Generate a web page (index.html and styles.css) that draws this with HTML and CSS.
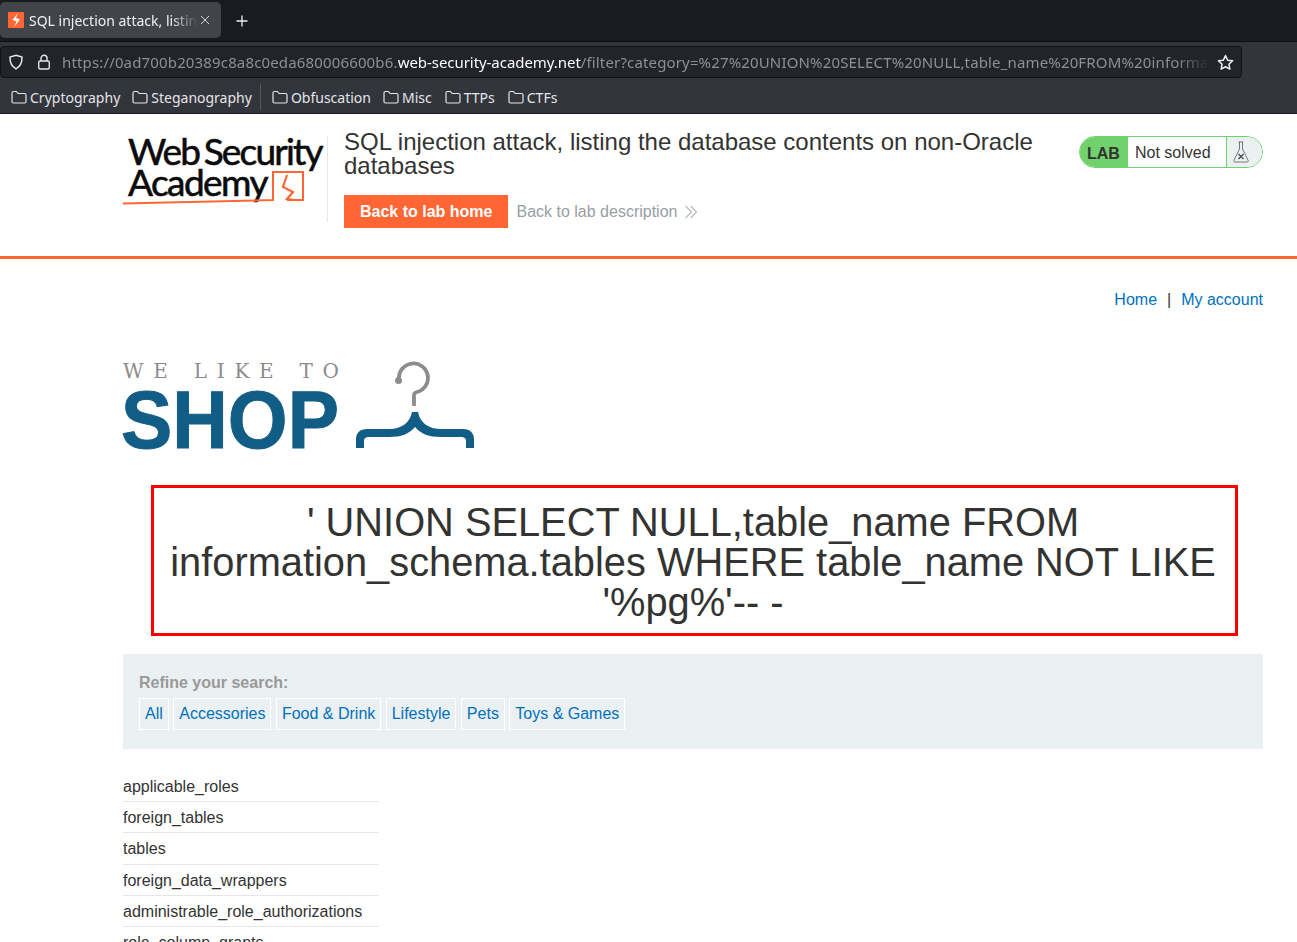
FILE: index.html
```html
<!DOCTYPE html>
<html lang="en">
<head>
<meta charset="utf-8">
<title>SQL injection attack</title>
<link rel="stylesheet" href="styles.css">
</head>
<body>
<div class="browser">
  <div class="tabbar">
    <div class="tab">
      <svg class="favicon" viewBox="0 0 16 16"><rect width="16" height="16" rx="1" fill="#ff6633"/><path d="M10 1 4.500 8l4 1.500L6 15l6-7.500-4-1.500z" fill="#fff"/></svg>
      <span class="tab-title">SQL injection attack, listing the database</span>
      <svg class="tab-close" viewBox="0 0 10 10"><path d="M1 1l8 8M9 1l-8 8" stroke="#d5d6da" stroke-width="1"/></svg>
    </div>
    <svg class="newtab" viewBox="0 0 12 12"><path d="M6 .5v11M.5 6h11" stroke="#eceef2" stroke-width="1.300"/></svg>
  </div>
  <div class="navbar">
    <div class="urlbar">
      <svg class="shield" viewBox="0 0 16 16"><path d="M8 1.200 14 3c.2 5.500-1.800 9.500-6 11.800C3.800 12.500 1.800 8.500 2 3z" fill="none" stroke="#e6e7ea" stroke-width="1.500"/></svg>
      <svg class="lock" viewBox="0 0 16 16"><rect x="2.700" y="7" width="10.600" height="8" rx="1.500" fill="none" stroke="#e6e7ea" stroke-width="1.400"/><path d="M5 7V4.300a3 3 0 0 1 6 0V7" fill="none" stroke="#e6e7ea" stroke-width="1.400"/></svg>
      <div class="url"><span class="dim">https://0ad700b20389c8a8c0eda680006600b6.</span><span class="host">web-security-academy.net</span><span class="dim">/filter?category=%27%20UNION%20SELECT%20NULL,table_name%20FROM%20information_schema.tables</span></div>
      <svg class="star" viewBox="0 0 16 16"><path d="m8 1.500 2 4.300 4.700.6-3.500 3.200.9 4.700L8 12l-4.100 2.300.9-4.700L1.300 6.400 6 5.800z" fill="none" stroke="#f0f1f3" stroke-width="1.400" stroke-linejoin="round"/></svg>
    </div>
  </div>
  <div class="bookmarks">
    <div class="bm"><svg class="folder" viewBox="0 0 16 14"><path d="M1 3a1.500 1.500 0 0 1 1.500-1.500h3L7 3.500h6.500A1.500 1.500 0 0 1 15 5v6.500a1.500 1.500 0 0 1-1.500 1.500h-11A1.500 1.500 0 0 1 1 11.500z"/></svg>Cryptography</div>
    <div class="bm"><svg class="folder" viewBox="0 0 16 14"><path d="M1 3a1.500 1.500 0 0 1 1.500-1.500h3L7 3.500h6.500A1.500 1.500 0 0 1 15 5v6.500a1.500 1.500 0 0 1-1.500 1.500h-11A1.500 1.500 0 0 1 1 11.500z"/></svg>Steganography</div>
    <div class="bm-sep"></div>
    <div class="bm"><svg class="folder" viewBox="0 0 16 14"><path d="M1 3a1.500 1.500 0 0 1 1.500-1.500h3L7 3.500h6.500A1.500 1.500 0 0 1 15 5v6.500a1.500 1.500 0 0 1-1.500 1.500h-11A1.500 1.500 0 0 1 1 11.500z"/></svg>Obfuscation</div>
    <div class="bm"><svg class="folder" viewBox="0 0 16 14"><path d="M1 3a1.500 1.500 0 0 1 1.500-1.500h3L7 3.500h6.500A1.500 1.500 0 0 1 15 5v6.500a1.500 1.500 0 0 1-1.500 1.500h-11A1.500 1.500 0 0 1 1 11.500z"/></svg>Misc</div>
    <div class="bm"><svg class="folder" viewBox="0 0 16 14"><path d="M1 3a1.500 1.500 0 0 1 1.500-1.500h3L7 3.500h6.500A1.500 1.500 0 0 1 15 5v6.500a1.500 1.500 0 0 1-1.500 1.500h-11A1.500 1.500 0 0 1 1 11.500z"/></svg>TTPs</div>
    <div class="bm"><svg class="folder" viewBox="0 0 16 14"><path d="M1 3a1.500 1.500 0 0 1 1.500-1.500h3L7 3.500h6.500A1.500 1.500 0 0 1 15 5v6.500a1.500 1.500 0 0 1-1.500 1.500h-11A1.500 1.500 0 0 1 1 11.500z"/></svg>CTFs</div>
  </div>
</div>
<header class="lab-header">
  <div class="academy-logo">
    <svg viewBox="0 0 204 72" width="204" height="72">
      <text class="logo-text" x="7" y="29" textLength="194">Web Security</text>
      <text class="logo-text" x="7" y="60" textLength="139">Academy</text>
      <path d="M2 67.500c50-1 100-2 150-3.500V36h30v28h-16" fill="none" stroke="#ff6633" stroke-width="2"/>
      <path d="M166 39l-4 12 10 5-6 7 8 1" fill="none" stroke="#ff6633" stroke-width="2.200"/>
    </svg>
  </div>
  <div class="lab-info">
    <h2 class="lab-title">SQL injection attack, listing the database contents on non-Oracle databases</h2>
    <div class="lab-actions">
      <a class="btn-home">Back to lab home</a>
      <a class="link-desc">Back to lab description
        <svg class="chevrons" viewBox="0 0 14 14"><path d="M1.500 1l6 6-6 6M6.500 1l6 6-6 6" fill="none" stroke="#b3b6bb" stroke-width="1.100"/></svg>
      </a>
    </div>
  </div>
  <div class="badge">
    <span class="badge-lab">LAB</span>
    <span class="badge-status">Not solved</span>
    <span class="badge-icon"><svg viewBox="0 0 18 24" width="18" height="24"><path d="M6.500 2h5M7.500 2v7L1.800 20.500c-.4 1 .2 1.500 1 1.500h12.400c.8 0 1.400-.5 1-1.500L10.500 9V2" fill="none" stroke="#777" stroke-width="1"/><path d="M6.500 14l5 5M11.500 14l-5 5" stroke="#444" stroke-width="1.200"/></svg></span>
  </div>
</header>
<main class="page">
  <nav class="top-links"><a>Home</a><span class="pipe">|</span><a>My account</a></nav>
  <div class="shop-logo">
    <svg viewBox="0 0 352 92" width="352" height="92">
      <text class="shop-like" x="0" y="19" textLength="216">WE LIKE TO</text>
      <text class="shop-name" x="-2" y="89" textLength="218" lengthAdjust="spacingAndGlyphs">SHOP</text>
      <path d="M276 20A14.500 14.500 0 1 1 294 33c-2 .5-3 1-3 3v11" fill="none" stroke="#8c8c8c" stroke-width="3.800"/>
      <circle cx="275.500" cy="21.500" r="3.500" fill="#8c8c8c"/>
      <path d="M233 89V80c0-6 4-10 11-10h22c12 0 21-6 23-17h6c2 11 11 17 23 17h22c7 0 11 4 11 10v9h-8v-7c0-3-2-4-5-4h-20c-12 0-20-3-26-10-6 7-14 10-26 10h-20c-3 0-5 1-5 4v7z" fill="#125d85"/>
    </svg>
  </div>
  <h1 class="result-title">' UNION SELECT NULL,table_name FROM information_schema.tables WHERE table_name NOT LIKE '%pg%'-- -</h1>
  <section class="filters">
    <div class="filters-label">Refine your search:</div>
    <div class="filters-list">
      <a>All</a><a>Accessories</a><a>Food &amp; Drink</a><a>Lifestyle</a><a>Pets</a><a>Toys &amp; Games</a>
    </div>
  </section>
  <ul class="rows">
    <li>applicable_roles</li>
    <li>foreign_tables</li>
    <li>tables</li>
    <li>foreign_data_wrappers</li>
    <li>administrable_role_authorizations</li>
    <li>role_column_grants</li>
  </ul>
</main>
</body>
</html>
```
FILE: styles.css
```css
* { box-sizing: border-box; }
html, body { margin: 0; padding: 0; height: 942px; overflow: hidden; background: #fff; }
body { font-family: "Liberation Sans", Arial, sans-serif; color: #333332; font-size: 16px; }

.browser { font-family: "Noto Sans", sans-serif; height: 114px; background: #33353c; border-bottom: 1px solid #16171b; }
.tabbar { height: 42px; background: #1a1b20; border-bottom: 1px solid #0e0f12; display: flex; align-items: flex-start; padding-top: 2px; }
.tab { width: 221px; height: 36px; background: #42444b; border-radius: 5px; display: flex; align-items: center; padding: 0 11px 0 8px; color: #f0f0f2; font-size: 14px; }
.favicon { width: 16px; height: 16px; flex: none; margin-right: 5px; }
.tab-title { flex: 1; white-space: nowrap; overflow: hidden; -webkit-mask-image: linear-gradient(90deg, #000 84%, transparent 100%); mask-image: linear-gradient(90deg, #000 84%, transparent 100%); }
.tab-close { width: 10px; height: 10px; flex: none; margin-left: 2px; }
.newtab { width: 12px; height: 12px; margin: 13px 0 0 15px; }
.navbar { height: 39px; padding-top: 4px; }
.urlbar { width: 1242px; height: 32px; background: #22232b; border: 1px solid #111216; border-radius: 4px; display: flex; align-items: center; padding-left: 7px; font-size: 15px; letter-spacing: .15px; }
.shield { width: 16px; height: 16px; flex: none; }
.lock { width: 16px; height: 16px; flex: none; margin-left: 12px; }
.url { margin-left: 10px; width: 1148px; flex: none; white-space: nowrap; overflow: hidden; -webkit-mask-image: linear-gradient(90deg, #000 97%, transparent 100%); mask-image: linear-gradient(90deg, #000 97%, transparent 100%); }
.dim { color: #8f9096; }
.host { color: #fbfbfe; letter-spacing: -.05px; }
.star { width: 17px; height: 17px; flex: none; margin-left: 7px; }
.bookmarks { height: 32px; display: flex; align-items: center; padding-left: 11px; font-size: 14px; color: #e4e5e8; }
.bm { display: flex; align-items: center; margin-right: 12px; white-space: nowrap; }
.bm:nth-last-child(-n+3) { margin-right: 13px; }
.folder { width: 16px; height: 14px; margin-right: 3px; fill: none; stroke: #e4e5e8; stroke-width: 1.200; }
.bm-sep { width: 1px; height: 26px; background: #55575e; margin: 0 11px 0 -4px; }

.lab-header { height: 145px; border-bottom: 3px solid #ff6633; display: flex; padding: 16px 34px 0 123px; }
.academy-logo { width: 205px; height: 86px; margin-top: 6px; border-right: 1px solid #e6e6e6; flex: none; }
.academy-logo svg { display: block; margin-left: -2px; overflow: visible; }
.logo-text { font-family: "Lato", sans-serif; font-size: 37px; fill: #0b0b0b; stroke: #0b0b0b; stroke-width: .6px; letter-spacing: -1.500px; word-spacing: -3px; }
.lab-info { width: 720px; margin-left: 16px; flex: none; }
.lab-title { margin: 0; font-size: 24px; line-height: 24px; font-weight: 400; color: #333332; }
.lab-actions { display: flex; align-items: center; margin-top: 17px; }
.btn-home { background: #ff6633; color: #fff; font-weight: 700; height: 33px; line-height: 33px; padding: 0 16px; }
.link-desc { color: #999ea3; margin-left: 8px; display: flex; align-items: center; }
.chevrons { width: 14px; height: 14px; margin-left: 7px; }
.badge { margin-left: auto; margin-top: 6px; width: 184px; height: 32px; border: 1px solid #70d16d; border-radius: 16px; display: flex; overflow: hidden; flex: none; }
.badge-lab { width: 48px; background: #70d16d; font-weight: 700; line-height: 33px; padding-left: 7px; }
.badge-status { width: 98px; line-height: 31px; padding-left: 7px; }
.badge-icon { flex: 1; background: #ebf0f2; border-left: 1px solid #70d16d; padding: 3px 0 0 5px; }

.page { padding: 0 34px 0 123px; }
.top-links { display: flex; justify-content: flex-end; padding-top: 32px; line-height: 18px; }
.top-links a { color: #0071bc; }
.pipe { margin: 0 10px; color: #333332; }
.shop-logo { margin-top: 50px; height: 92px; }
.shop-logo svg { display: block; overflow: visible; }
.shop-like { font-family: "DejaVu Serif", serif; font-size: 20px; fill: #8c8c8c; }
.shop-name { font-family: "Liberation Sans", sans-serif; font-weight: 700; font-size: 81px; fill: #125d85; stroke: #125d85; stroke-width: 1px; }
.result-title { width: 1087px; height: 151px; margin: 34px 0 0 28px; border: 3px solid #ff0000; font-size: 39.800px; line-height: 40px; font-weight: 400; text-align: center; color: #333332; padding: 14px 13px 0 10px; }
.filters { margin-top: 18px; height: 95px; background: #ebf0f2; padding: 20px 16px 0; }
.filters-label { font-weight: 700; color: #999; line-height: 18px; }
.filters-list { display: flex; gap: 4.450px; margin-top: 6px; }
.filters-list a { color: #0071bc; border: 1px solid #fff; height: 32px; line-height: 30px; padding: 0 5px; }
.rows { list-style: none; margin: 21px 0 0; padding: .6px 0 0; width: 256px; }
.rows li { height: 31.330px; line-height: 31px; border-bottom: 1px solid #e6e6e6; white-space: nowrap; }
```
